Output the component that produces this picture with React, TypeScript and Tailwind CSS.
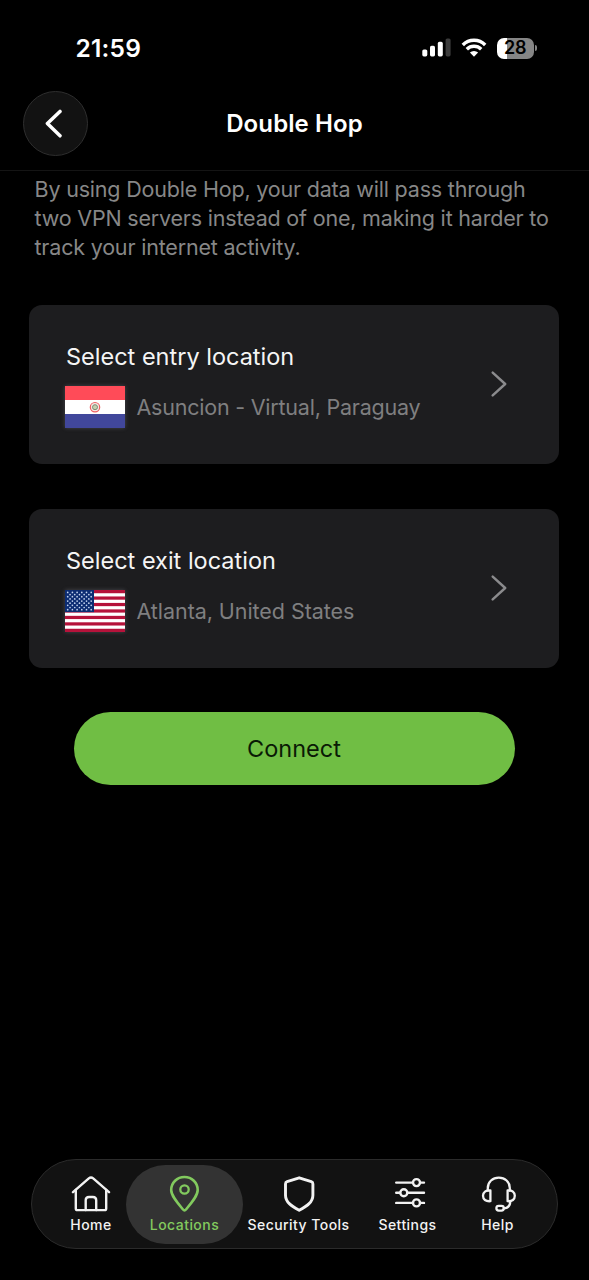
import React from "react";
import clsx from "clsx";

interface ILocationCardProps {
  title: string;
  location: string;
  locationClass: string;
  flag: React.ReactNode;
}

interface ITab {
  label: string;
  icon: React.ReactNode;
  cell: string;
  active?: boolean;
}

const STAR_ROWS = [0, 1, 2, 3, 4, 5, 6, 7, 8];

const ParaguayFlag = () => (
  <svg width="60" height="42" viewBox="0 0 60 42">
    <rect width="60" height="14" fill="#ff4b58" />
    <rect y="14" width="60" height="14" fill="#ffffff" />
    <rect y="28" width="60" height="14" fill="#41479b" />
    <circle cx="30" cy="21.2" r="4.7" fill="#f6e9e4" stroke="#ee5f63" strokeWidth="1.2" />
    <circle cx="30" cy="21.2" r="2.5" fill="#c5cfae" stroke="#7d8d78" strokeWidth="1" />
  </svg>
);

const UsaFlag = () => (
  <svg width="60" height="42" viewBox="0 0 60 42">
    <rect width="60" height="42" fill="#ffffff" />
    {[0, 2, 4, 6, 8, 10, 12].map((i) => (
      <rect key={i} y={i * 3.23} width="60" height="3.23" fill="#b5123a" />
    ))}
    <rect width="29" height="22.1" fill="#0c2c72" />
    {STAR_ROWS.map((row) =>
      (row % 2 ? [0, 1, 2, 3, 4] : [0, 1, 2, 3, 4, 5]).map((col) => (
        <circle
          key={`${row}-${col}`}
          cx={2.7 + col * 4.7 + (row % 2 ? 2.35 : 0)}
          cy={2.4 + row * 2.16}
          r="0.85"
          fill="#c3d3ee"
        />
      ))
    )}
  </svg>
);

const HomeIcon = () => (
  <svg width="40" height="38" viewBox="0 0 40 38" fill="none" stroke="currentColor" strokeWidth="2.4" strokeLinecap="round" strokeLinejoin="round">
    <path d="M4.8 15V33.4Q4.8 35.1 6.5 35.1H33.5Q35.2 35.1 35.2 33.4V15" />
    <path d="M2 17.2L17.8 3.4Q20 1.5 22.2 3.4L38 17.2" />
    <path d="M14.7 35V25.3Q14.7 22 18 22H21.9Q25.2 22 25.2 25.3V35" />
  </svg>
);

const PinIcon = () => (
  <svg width="40" height="38" viewBox="0 0 40 38" fill="none" stroke="currentColor" strokeWidth="2.6" strokeLinejoin="round">
    <path d="M19.5 35.4Q18.8 35.4 18 34.5C11 26.3 6.2 20.3 6.2 15A13.2 13 0 0 1 32.7 15C32.7 20.3 28 26.3 21 34.5Q20.2 35.4 19.5 35.4Z" />
    <circle cx="19.5" cy="14.5" r="4.2" strokeWidth="2.3" />
  </svg>
);

const ShieldIcon = () => (
  <svg width="40" height="38" viewBox="0 0 40 38" fill="none" stroke="currentColor" strokeWidth="2.9" strokeLinejoin="round">
    <path d="M20.2 2.8L8.1 6.7Q6.5 7.2 6.5 8.9V20.2C6.5 27.4 12.8 31.2 20.2 35.3C27.6 31.2 33.9 27.4 33.9 20.2V8.9Q33.9 7.2 32.3 6.7Z" />
  </svg>
);

const SlidersIcon = () => (
  <svg width="40" height="38" viewBox="0 0 40 38" fill="none" stroke="currentColor" strokeWidth="2.4" strokeLinecap="round">
    <path d="M8.2 7.6H24.8M32.4 7.6H36M8.2 17.8H12M19.6 17.8H36M8.2 27.9H24.8M32.4 27.9H36" />
    <circle cx="28.5" cy="7.6" r="3.5" />
    <circle cx="15.8" cy="17.8" r="3.5" />
    <circle cx="28.5" cy="27.9" r="3.5" />
  </svg>
);

const HeadsetIcon = () => (
  <svg width="40" height="38" viewBox="0 0 40 38" fill="none" stroke="currentColor" strokeWidth="2.3" strokeLinecap="round" strokeLinejoin="round">
    <path d="M9.8 15.5V13C9.8 6.8 14.7 2.6 20.8 2.6S31.8 6.8 31.8 13V15.5" />
    <path d="M12.4 15.4V26.2C7.8 26.6 5 24.5 5 20.8S7.8 15 12.4 15.4Z" />
    <path d="M29.6 15.4V26.2C34.2 26.6 36.8 24.5 36.8 20.8S34.2 15 29.6 15.4Z" />
    <path d="M32.3 26.4C32.1 30.8 30 33.2 25.8 33.4" />
    <rect x="18.4" y="30.8" width="7.4" height="4.8" rx="2.3" />
  </svg>
);

const tabs: ITab[] = [
  { label: "Home", icon: <HomeIcon />, cell: "w-[70px]" },
  { label: "Locations", icon: <PinIcon />, cell: "w-[117px]", active: true },
  { label: "Security Tools", icon: <ShieldIcon />, cell: "w-[111px]" },
  { label: "Settings", icon: <SlidersIcon />, cell: "w-[107px]" },
  { label: "Help", icon: <HeadsetIcon />, cell: "w-[73px]" },
];

const StatusBar = () => (
  <div className="flex h-[91px] items-start justify-between pl-[75.5px] pr-[52px] pt-[33px] text-white">
    <span className="text-[24.5px] font-semibold leading-[30px] tracking-[0.2px]">21:59</span>
    <div className="flex h-[30px] items-center">
      <svg width="29" height="20" viewBox="0 0 29 20" fill="#ffffff">
        <rect x="0.3" y="11.4" width="5" height="7" rx="1.6" />
        <rect x="8" y="7.7" width="5" height="10.7" rx="1.6" />
        <rect x="15.8" y="3.8" width="5" height="14.6" rx="1.6" />
        <rect x="23.6" y="0.4" width="5" height="18" rx="1.6" fill="#3b3b3b" />
      </svg>
      <svg width="26" height="20" viewBox="0 0 26 20" className="ml-[10px]" fill="none" stroke="#ffffff" strokeWidth="3.4">
        <path d="M1.8 7A15.7 15.7 0 0 1 24.2 7" />
        <path d="M5.8 11.3A10.2 10.2 0 0 1 20.2 11.3" />
        <path d="M13 18.8L8.9 14.6A5.8 5.8 0 0 1 17.1 14.6Z" fill="#ffffff" stroke="none" />
      </svg>
      <div className="ml-[10px] flex items-center">
        <div className="flex h-[21px] w-[37.5px] items-center justify-center rounded-[7px] bg-[linear-gradient(to_right,#ffffff_28%,#858585_28%)]">
          <span className="text-[18px] font-semibold leading-none text-black">28</span>
        </div>
        <div className="ml-px h-[6px] w-[2px] rounded-r-full bg-[#858585]" />
      </div>
    </div>
  </div>
);

const Header = () => (
  <header className="h-[170.5px] border-b border-[#141414]">
    <StatusBar />
    <div className="grid grid-cols-[65px_1fr_65px] items-center px-[23px]">
      <button className="flex h-[65px] w-[65px] items-center justify-center rounded-full border border-[#2e2e2e] bg-[#121212]">
        <svg width="18" height="30" viewBox="0 0 18 30" className="mr-[4px]" fill="none" stroke="#ffffff" strokeWidth="3.5" strokeLinecap="round" strokeLinejoin="round">
          <path d="M15 2.4L2.4 14.6L15 26.8" />
        </svg>
      </button>
      <h1 className="text-center text-[24px] font-semibold tracking-[0.1px] text-white">Double Hop</h1>
    </div>
  </header>
);

const LocationCard: React.FC<ILocationCardProps> = ({ title, location, locationClass, flag }) => (
  <button className="flex h-[159px] w-full items-center justify-between rounded-[13px] bg-[#1d1d1f] pl-[36px] pr-[52px] text-left">
    <div className="pt-[2px]">
      <p className="pl-[1px] text-[23.5px] leading-[30px] text-[#f5f5f5]">{title}</p>
      <div className="mt-[14px] flex items-center gap-[11.5px]">
        <div className="shadow-[0_0_4px_rgba(150,150,160,0.35)]">{flag}</div>
        <span className={clsx("text-[21.5px] leading-[30px] text-[#7f7f80]", locationClass)}>{location}</span>
      </div>
    </div>
    <svg width="16" height="26" viewBox="0 0 16 26" fill="none" stroke="#8b8b8d" strokeWidth="2.4" strokeLinecap="round" strokeLinejoin="round">
      <path d="M1.7 1.6L14.2 13L1.7 24.4" />
    </svg>
  </button>
);

const TabBar = () => (
  <nav className="mb-[31px] ml-[30.5px] mr-[31px] flex h-[90px] items-center justify-center rounded-full border border-[#2b2b2b] bg-[#121212] pl-[1.5px]">
    {tabs.map((tab) => (
      <button
        key={tab.label}
        className={clsx(
          "flex h-[79px] flex-col items-center rounded-full pt-[10px]",
          tab.cell,
          tab.active ? "bg-[#333333] text-[#82ca5e]" : "text-[#f2f2f2]"
        )}
      >
        {tab.icon}
        <span className="mt-[3px] whitespace-nowrap text-[14px] font-medium leading-[18px] tracking-[0.45px]">
          {tab.label}
        </span>
      </button>
    ))}
  </nav>
);

const App: React.FC = () => {
  return (
    <div className="flex h-[1280px] w-[589px] flex-col overflow-hidden bg-black font-['Inter',sans-serif]">
      <Header />

      <main className="flex-1 pl-[29px] pr-[30px]">
        <p className="mt-[4px] whitespace-nowrap pl-[5.5px] text-[21.5px] leading-[29.3px] tracking-[-0.19px] text-[#878787]">
          By using Double Hop, your data will pass through
          <br />
          two VPN servers instead of one, making it harder to
          <br />
          track your internet activity.
        </p>

        <div className="mt-[42.5px] flex flex-col gap-[45px]">
          <LocationCard
            title="Select entry location"
            location="Asuncion - Virtual, Paraguay"
            locationClass="tracking-[-0.22px]"
            flag={<ParaguayFlag />}
          />
          <LocationCard
            title="Select exit location"
            location="Atlanta, United States"
            locationClass="tracking-[-0.06px]"
            flag={<UsaFlag />}
          />
        </div>

        <div className="mt-[44px] flex justify-center">
          <button className="h-[73px] w-[441px] rounded-full bg-[#70be44] text-[23.5px] text-[#0a1a05]">Connect</button>
        </div>
      </main>

      <TabBar />
    </div>
  );
};

export default App;
